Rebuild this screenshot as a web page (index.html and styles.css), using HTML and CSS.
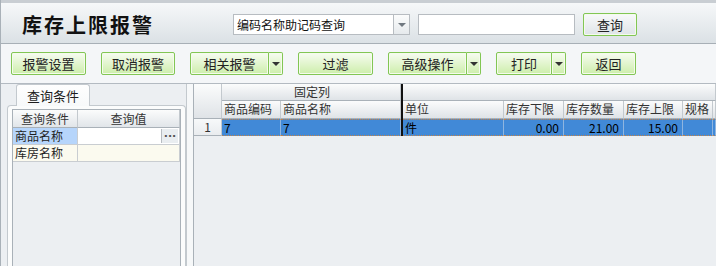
FILE: index.html
```html
<!DOCTYPE html>
<html>
  <head>
    <meta charset="utf-8">
    <title>库存上限报警</title>
    <link rel="stylesheet" href="styles.css">
  </head>
  <body>
    <div class="app">
      <header class="title-bar">
        <h1 class="title">库存上限报警</h1>
        <div class="search">
          <div class="select">
            <span class="select-text">编码名称助记码查询</span>
            <span class="select-arrow"><i class="caret"></i></span>
          </div>
          <input class="search-input" type="text">
          <button type="button" class="btn btn-query">查询</button>
        </div>
      </header>

      <nav class="toolbar">
        <button type="button" class="btn w75">报警设置</button>
        <button type="button" class="btn w74">取消报警</button>
        <div class="split">
          <button type="button" class="btn split-main w79">相关报警</button>
          <button type="button" class="btn split-arrow"><i class="caret"></i></button>
        </div>
        <button type="button" class="btn w75">过滤</button>
        <div class="split">
          <button type="button" class="btn split-main w79">高级操作</button>
          <button type="button" class="btn split-arrow"><i class="caret"></i></button>
        </div>
        <div class="split">
          <button type="button" class="btn split-main w56">打印</button>
          <button type="button" class="btn split-arrow"><i class="caret"></i></button>
        </div>
        <button type="button" class="btn w55">返回</button>
      </nav>

      <main class="workspace">
        <aside class="query-pane">
          <div class="tabs">
            <span class="tab">查询条件</span>
          </div>
          <div class="tab-body">
            <div class="cond-grid">
              <div class="cond-head">查询条件</div>
              <div class="cond-head">查询值</div>
              <div class="cond-name selected">商品名称</div>
              <div class="cond-value"><span class="ellipsis">...</span></div>
              <div class="cond-name cream">库房名称</div>
              <div class="cond-value cream"></div>
            </div>
          </div>
        </aside>

        <div class="splitter"></div>

        <section class="data-grid">
          <div class="cell head corner"></div>
          <div class="cell head group">固定列</div>
          <div class="freeze-line"></div>
          <div class="cell head group-rest"></div>

          <div class="cell head">商品编码</div>
          <div class="cell head">商品名称</div>
          <div class="cell head">单位</div>
          <div class="cell head">库存下限</div>
          <div class="cell head">库存数量</div>
          <div class="cell head">库存上限</div>
          <div class="cell head">规格</div>
          <div class="cell head"></div>

          <div class="cell head row-no">1</div>
          <div class="cell sel">7</div>
          <div class="cell sel">7</div>
          <div class="cell sel">件</div>
          <div class="cell sel num">0.00</div>
          <div class="cell sel num">21.00</div>
          <div class="cell sel num">15.00</div>
          <div class="cell sel"></div>
          <div class="cell sel"></div>
        </section>
      </main>
    </div>
  </body>
</html>
```

FILE: styles.css
```css
:root {
  --color-border: #a9b1b8;
  --color-border-light: #c3c9ce;
  --color-panel: #eceff2;
  --color-green: #82c654;
  --color-select: #4189d7;
  --color-select-light: #b6d5fb;
  --color-cream: #fbfaef;
  --color-text: #1e1e1e;

  --font-ui: "Noto Sans CJK SC", "DejaVu Sans", sans-serif;
}

* {
  box-sizing: border-box;
}

html, body {
  margin: 0;
  padding: 0;
}

body {
  width: 716px;
  height: 266px;
  overflow: hidden;
  font-family: var(--font-ui);
  font-size: 12px;
  color: var(--color-text);
  background: var(--color-panel);
}

.app {
  display: flex;
  flex-direction: column;
  height: 266px;
  border-left: 1px solid var(--color-border);
}

/* title bar */

.title-bar {
  display: flex;
  align-items: center;
  height: 44px;
  padding-top: 3px;
  border-top: 3px solid #c9ced3;
  border-bottom: 1px solid #a7afb6;
  background: linear-gradient(#f6f8f9, #dbe1e5);
}

.title {
  width: 232px;
  margin: 0;
  padding-left: 21px;
  font-size: 20px;
  font-weight: bold;
  letter-spacing: 2px;
  color: #111;
}

.search {
  display: flex;
  align-items: center;
  gap: 8px;
}

.select {
  display: flex;
  width: 177px;
  height: 21px;
  border: 1px solid #b7bcc1;
  background: #fff;
}

.select-text {
  flex: 1;
  padding-left: 3px;
  line-height: 19px;
  color: #111;
}

.select-arrow {
  display: flex;
  align-items: center;
  justify-content: center;
  width: 16px;
  border-left: 1px solid #b7bcc1;
  background: linear-gradient(#fbfcfc, #e6eaed);
}

.select-arrow .caret {
  border-top-color: #707880;
}

.search-input {
  width: 157px;
  height: 21px;
  margin: 0;
  border: 1px solid #b7bcc1;
  background: #fff;
}

.caret {
  display: block;
  width: 0;
  height: 0;
  border-left: 4px solid transparent;
  border-right: 4px solid transparent;
  border-top: 4px solid #333;
}

/* buttons */

.btn {
  height: 23px;
  margin: 0;
  padding: 0;
  font-family: var(--font-ui);
  font-size: 13px;
  color: #222;
  border: 1px solid var(--color-green);
  border-radius: 2px;
  box-shadow: inset 0 0 0 1px #f4fbec;
  background: linear-gradient(#f7fcf1, #cdeeab);
  cursor: pointer;
}

.btn-query {
  width: 54px;
  background: linear-gradient(#f8f9fa, #dfe4e8);
}

.w55 { width: 55px; }
.w56 { width: 56px; }
.w74 { width: 74px; }
.w75 { width: 75px; }
.w79 { width: 79px; }

.split {
  display: flex;
}

.split-main {
  border-radius: 2px 0 0 2px;
}

.split-arrow {
  display: flex;
  align-items: center;
  justify-content: center;
  width: 14px;
  border-left: none;
  border-radius: 0 2px 2px 0;
}

/* toolbar */

.toolbar {
  display: flex;
  align-items: flex-start;
  gap: 15px;
  height: 40px;
  padding: 8px 0 0 10px;
  border-bottom: 1px solid #b3bac1;
  background: #f4f6f8;
}

/* workspace */

.workspace {
  display: flex;
  flex: 1;
  min-height: 0;
}

.query-pane {
  display: flex;
  flex-direction: column;
  width: 185px;
  padding-left: 6px;
  background: var(--color-panel);
}

.tabs {
  display: flex;
  height: 21px;
  padding-left: 9px;
}

.tab {
  width: 74px;
  height: 22px;
  position: relative;
  z-index: 1;
  padding-top: 1px;
  font-size: 13px;
  text-align: center;
  border: 1px solid var(--color-border-light);
  border-bottom: none;
  border-radius: 3px 3px 0 0;
  background: linear-gradient(#fefefe, #f7f9fa);
}

.tab-body {
  flex: 1;
  padding: 3px 4px 0 4px;
  border: 1px solid var(--color-border-light);
  border-bottom: none;
  border-radius: 4px 4px 0 0;
  background: #fbfcfc;
}

.cond-grid {
  display: grid;
  grid-template-columns: 65px 1fr;
  grid-template-rows: 18px 17px 17px;
  height: 100%;
  align-content: start;
  border: 1px solid var(--color-border);
  border-bottom: none;
  background: var(--color-panel);
}

.cond-head {
  line-height: 17px;
  text-align: center;
  color: #333;
  border-right: 1px solid #c3c9ce;
  border-bottom: 1px solid var(--color-border);
  background: linear-gradient(#fbfcfc, #e1e5e9);
}

.cond-name,
.cond-value {
  line-height: 16px;
  padding-left: 2px;
  border-right: 1px solid #c9cdd1;
  border-bottom: 1px solid #c9cdd1;
  background: #fff;
}

.cond-value {
  display: flex;
  justify-content: flex-end;
  padding: 1px 1px 1px 0;
}

.cond-name.selected {
  background: var(--color-select-light);
}

.cream {
  background: var(--color-cream);
}

.ellipsis {
  width: 17px;
  font-family: "DejaVu Sans", sans-serif;
  font-size: 11px;
  font-weight: bold;
  line-height: 10px;
  text-align: center;
  letter-spacing: 0;
  color: #555;
  border-left: 1px solid #b7bcc1;
  background: #e9edf0;
}

.splitter {
  width: 7px;
  border-left: 1px solid var(--color-border-light);
  background: #f6f8f9;
}

/* data grid */

.data-grid {
  display: grid;
  flex: 1;
  grid-template-columns: 28px 59px 120px 2px 101px 60px 60px 59px 30px 1fr;
  grid-template-rows: 17px 18px 17px;
  align-content: start;
  border-left: 1px solid var(--color-border);
  background: var(--color-panel);
}

.cell {
  overflow: hidden;
  white-space: nowrap;
  padding-left: 2px;
  line-height: 16px;
  border-right: 1px solid #c3c9ce;
  border-bottom: 1px solid var(--color-border);
}

.head {
  color: #333;
  background: linear-gradient(#fbfcfc, #dfe3e7);
}

.corner {
  grid-column: 1;
  grid-row: 1 / 3;
}

.group {
  grid-column: 2 / 4;
  text-align: center;
}

.group-rest {
  grid-column: 5 / 11;
}

.freeze-line {
  grid-column: 4;
  grid-row: 1 / 4;
  background: #111;
}

.row-no {
  padding-left: 0;
  text-align: center;
  background: linear-gradient(#f7f9fa, #e9ecef);
}

.sel {
  color: #000;
  background: var(--color-select);
  border-top: 1px dotted #c2834a;
  border-bottom: 1px dotted #c2834a;
  border-right: 1px solid #8fb5df;
  line-height: 15px;
}

.num {
  text-align: right;
  padding-right: 4px;
}
```
